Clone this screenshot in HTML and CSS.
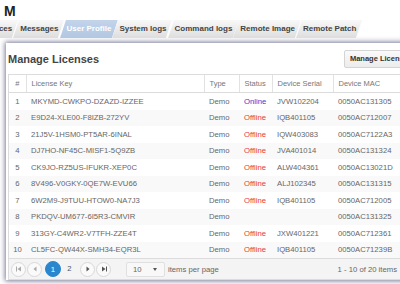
FILE: index.html
```html
<!DOCTYPE html>
<html lang="en">
<head>
    <meta charset="UTF-8">
    <meta name="viewport" content="width=device-width, initial-scale=1.0">
    <title>Manage Licenses</title>
    <link rel="stylesheet" href="styles.css">
</head>
<body>
    <div class="brand">M</div>

    <nav class="tabs">
        <a class="tab">Devices</a>
        <a class="tab">Messages</a>
        <a class="tab active">User Profile</a>
        <a class="tab">System logs</a>
        <a class="tab">Command logs</a>
        <a class="tab">Remote Image</a>
        <a class="tab">Remote Patch</a>
    </nav>

    <section class="panel">
        <div class="panel-head">
            <h2>Manage Licenses</h2>
            <button class="btn">Manage Licenses</button>
        </div>

        <div class="grid">
            <table>
                <colgroup>
                    <col class="c-num">
                    <col class="c-key">
                    <col class="c-type">
                    <col class="c-status">
                    <col class="c-serial">
                    <col class="c-mac">
                </colgroup>
                <thead>
                    <tr>
                        <th class="num">#</th>
                        <th>License Key</th>
                        <th>Type</th>
                        <th>Status</th>
                        <th>Device Serial</th>
                        <th>Device MAC</th>
                    </tr>
                </thead>
                <tbody>
                    <tr><td class="num">1</td><td>MKYMD-CWKPO-DZAZD-IZZEE</td><td>Demo</td><td class="online">Online</td><td>JVW102204</td><td>0050AC131305</td></tr>
                    <tr><td class="num">2</td><td>E9D24-XLE00-F8IZB-272YV</td><td>Demo</td><td class="offline">Offline</td><td>IQB401105</td><td>0050AC712007</td></tr>
                    <tr><td class="num">3</td><td>21J5V-1HSM0-PT5AR-6INAL</td><td>Demo</td><td class="offline">Offline</td><td>IQW403083</td><td>0050AC7122A3</td></tr>
                    <tr><td class="num">4</td><td>DJ7HO-NF45C-MISF1-5Q9ZB</td><td>Demo</td><td class="offline">Offline</td><td>JVA401014</td><td>0050AC131324</td></tr>
                    <tr><td class="num">5</td><td>CK9JO-RZ5US-IFUKR-XEP0C</td><td>Demo</td><td class="offline">Offline</td><td>ALW404361</td><td>0050AC13021D</td></tr>
                    <tr><td class="num">6</td><td>8V496-V0GKY-0QE7W-EVU66</td><td>Demo</td><td class="offline">Offline</td><td>ALJ102345</td><td>0050AC131315</td></tr>
                    <tr><td class="num">7</td><td>6W2M9-J9TUU-HTOW0-NA7J3</td><td>Demo</td><td class="offline">Offline</td><td>IQB401105</td><td>0050AC712005</td></tr>
                    <tr><td class="num">8</td><td>PKDQV-UM677-6I5R3-CMVIR</td><td>Demo</td><td></td><td></td><td>0050AC131325</td></tr>
                    <tr><td class="num">9</td><td>313GY-C4WR2-V7TFH-ZZE4T</td><td>Demo</td><td class="offline">Offline</td><td>JXW401221</td><td>0050AC712361</td></tr>
                    <tr><td class="num">10</td><td>CL5FC-QW44X-SMH34-EQR3L</td><td>Demo</td><td class="offline">Offline</td><td>IQB401105</td><td>0050AC71239B</td></tr>
                </tbody>
            </table>

            <div class="pager">
                <span class="pg off"><svg width="6" height="6" viewBox="0 0 6 6"><rect x="0" y="0.5" width="1" height="5" fill="currentColor"/><path d="M5 0.5v5L1.5 3z" fill="currentColor"/></svg></span>
                <span class="pg off"><svg width="6" height="6" viewBox="0 0 6 6"><path d="M4.5 0.5v5L1.5 3z" fill="currentColor"/></svg></span>
                <span class="pg-nums">
                    <span class="pg current">1</span>
                    <span class="pg plain">2</span>
                </span>
                <span class="pg"><svg width="6" height="6" viewBox="0 0 6 6"><path d="M1.5 0.5v5L4.5 3z" fill="currentColor"/></svg></span>
                <span class="pg"><svg width="6" height="6" viewBox="0 0 6 6"><path d="M1 0.5v5L4.5 3z" fill="currentColor"/><rect x="5" y="0.5" width="1" height="5" fill="currentColor"/></svg></span>

                <span class="size">10<i class="caret"></i></span>
                <span class="size-label">items per page</span>
                <span class="info">1 - 10 of 20 items</span>
            </div>
        </div>
    </section>
</body>
</html>
```

FILE: styles.css
```css
body {
    margin: 0;
    width: 400px;
    height: 284px;
    overflow: hidden;
    background: #fff;
    font-family: "Liberation Sans", Arial, sans-serif;
    font-size: 7.7px;
    color: #666;
}

.brand {
    height: 20px;
    padding-left: 4px;
    font-size: 14px;
    font-weight: bold;
    line-height: 22px;
    color: #222;
}

.tabs {
    display: flex;
    height: 18px;
    margin-left: -22px;
}
.tab {
    position: relative;
    z-index: 0;
    padding: 0 4px;
    font-size: 8px;
    line-height: 18px;
    font-weight: bold;
    color: #444;
    white-space: nowrap;
}
.tab::before {
    content: "";
    position: absolute;
    top: 0;
    bottom: 0;
    left: 0;
    right: 0;
    z-index: -1;
    background: linear-gradient(#f8f8f8, #dddddd);
    border-right: 1px solid #fbfbfb;
    transform: skewX(-18deg);
}
.tab.active {
    color: #fff;
}
.tab.active::before {
    background: linear-gradient(#c3d4ea, #b2c7e2);
}

.panel {
    width: 410px;
    height: 237px;
    margin: 5px 0 0 6px;
    padding-left: 2px;
    box-shadow: 0 0 5px 1px rgba(60, 62, 104, 0.7);
}

.panel-head {
    display: flex;
    align-items: center;
    height: 31px;
}
.panel-head h2 {
    margin: 0;
    font-size: 11px;
    font-weight: bold;
    color: #444;
}
.btn {
    margin-left: auto;
    height: 18px;
    padding: 0 5px;
    border: 1px solid #d4d4d4;
    border-radius: 2px;
    background: linear-gradient(#fafafa, #ececec);
    font-family: inherit;
    font-size: 7.5px;
    font-weight: bold;
    color: #333;
}

.grid {
    width: 396px;
    border: 1px solid #dcdcdc;
}
table {
    width: 100%;
    border-collapse: collapse;
    table-layout: fixed;
}
.c-num { width: 17px; }
.c-key { width: 178px; }
.c-type { width: 35px; }
.c-status { width: 33px; }
.c-serial { width: 61px; }
th {
    height: 17px;
    padding: 0 5px;
    border-left: 1px solid #e2e2e2;
    border-bottom: 1px solid #dcdcdc;
    font-size: 7.5px;
    font-weight: normal;
    text-align: left;
    color: #777;
}
th:first-child {
    border-left: none;
}
td {
    height: 16.5px;
    padding: 0 5px;
    white-space: nowrap;
}
tbody tr:nth-child(even) {
    background: #f9f9f9;
}
.num {
    padding: 0;
    text-align: center;
}
.online {
    color: #2b3fd4;
}
.offline {
    color: #e8383d;
}

.pager {
    display: flex;
    align-items: center;
    height: 20px;
    padding-left: 2px;
    border-top: 1px solid #dcdcdc;
    background: #f4f4f4;
}
.pg {
    display: flex;
    align-items: center;
    justify-content: center;
    box-sizing: border-box;
    width: 15px;
    height: 15px;
    margin-right: 1px;
    border: 1px solid #d8d8d8;
    border-radius: 50%;
    background: #fafafa;
    color: #555;
}
.pg.off {
    color: #aaa;
}
.pg-nums {
    display: flex;
    margin: 0 2px;
}
.pg.current {
    width: 16px;
    height: 16px;
    border-color: #2a87cd;
    background: #2a87cd;
    color: #fff;
}
.pg.plain {
    border-color: transparent;
    background: none;
}
.size {
    display: flex;
    align-items: center;
    box-sizing: border-box;
    width: 39px;
    height: 15px;
    margin-left: 14px;
    padding-left: 6px;
    border: 1px solid #e0e0e0;
    border-radius: 2px;
    background: #f8f8f8;
}
.caret {
    margin-left: auto;
    margin-right: 7px;
    border-left: 2.5px solid transparent;
    border-right: 2.5px solid transparent;
    border-top: 3px solid #555;
}
.size-label {
    margin-left: 3px;
}
.info {
    margin-left: auto;
    padding-right: 8px;
}
```
